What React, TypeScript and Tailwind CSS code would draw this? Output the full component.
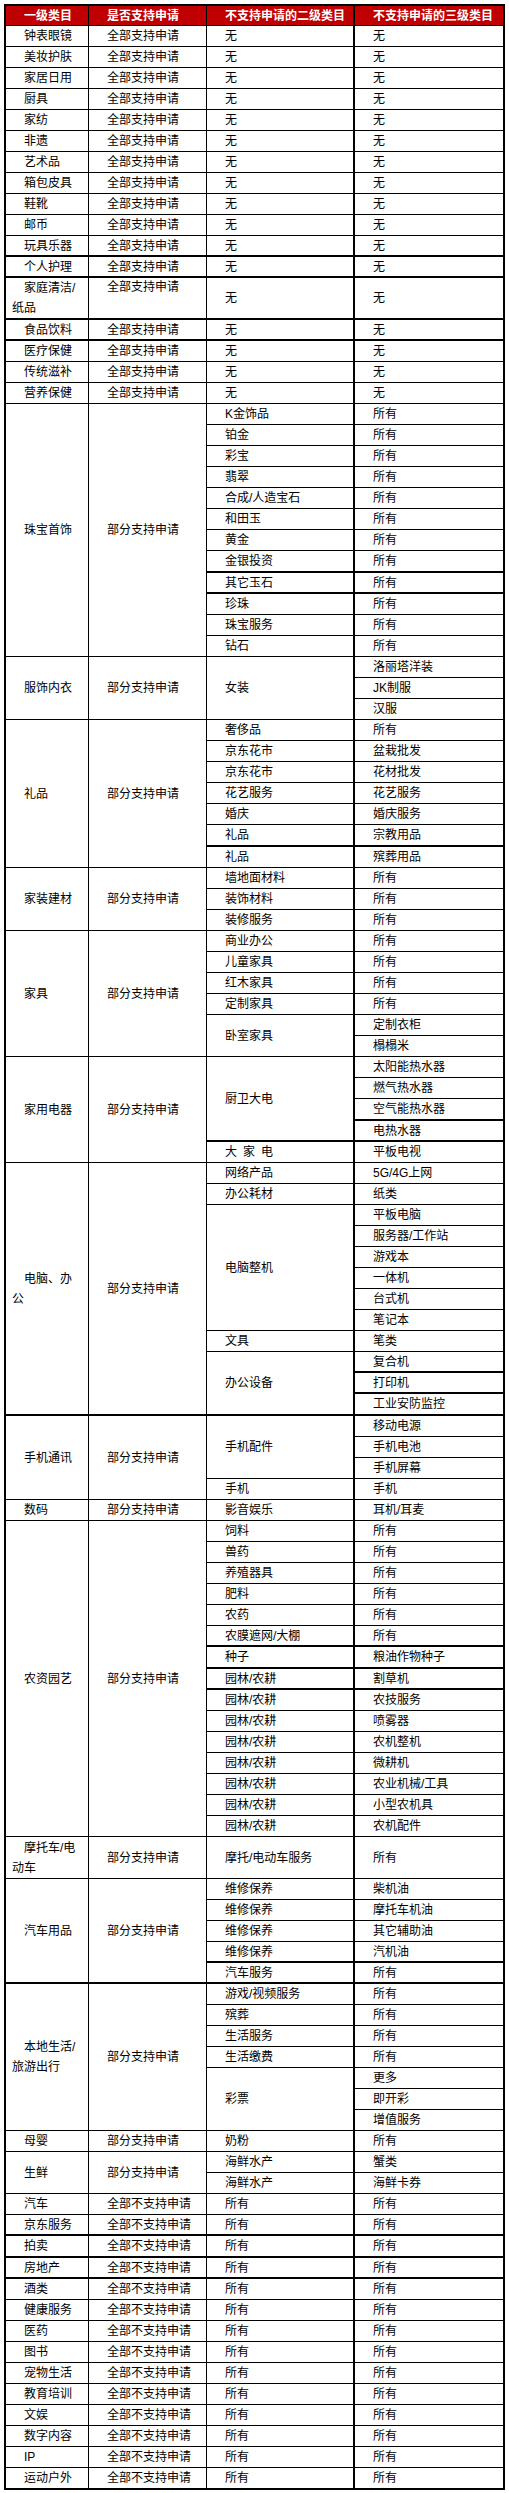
import React from "react";

type Leaf = { t: string; h?: 21 | 22 | 42; tb?: boolean };
type Sub = { t: string; leaves: Leaf[]; tb?: boolean };
type Group = { t: React.ReactNode; s: string; subs: Sub[]; tb?: boolean; top?: boolean; ml?: boolean };

const H: Record<number, string> = { 21: "h-[21px]", 22: "h-[22px]", 42: "h-[42px]" };

function L(t: string, h?: 21 | 22 | 42, tb?: boolean): Leaf {
  return { t, h, tb };
}
function S(t: string, leaves: Leaf[], tb?: boolean): Sub {
  return { t, leaves, tb };
}
function S1(t: string, c4: string, h?: 21 | 22 | 42, tb?: boolean): Sub {
  return { t, leaves: [{ t: c4, h, tb }], tb };
}
function A(t: string, h?: 21 | 22 | 42, tb?: boolean): Sub {
  return S1(t, "所有", h, tb);
}

const YES = "全部支持申请";
const PART = "部分支持申请";
const NO = "全部不支持申请";

function full(name: string, h?: 21 | 22, tb?: boolean): Group {
  return { t: name, s: YES, subs: [S1("无", "无", h, tb)], tb };
}
function none(name: string, h?: 21 | 22, tb?: boolean): Group {
  return { t: name, s: NO, subs: [S1("所有", "所有", h, tb)], tb };
}

const groups: Group[] = [
  full("钟表眼镜"),
  full("美妆护肤"),
  full("家居日用"),
  full("厨具"),
  full("家纺"),
  full("非遗"),
  full("艺术品"),
  full("箱包皮具"),
  full("鞋靴"),
  full("邮币"),
  full("玩具乐器", 21, true),
  full("个人护理", 21, true),
  {
    t: (
      <>
        家庭清洁/
        <br />
        纸品
      </>
    ),
    s: YES,
    subs: [S1("无", "无", 42, true)],
    tb: true,
    top: true,
    ml: true,
  },
  full("食品饮料", 21, true),
  full("医疗保健"),
  full("传统滋补"),
  full("营养保健"),
  {
    t: "珠宝首饰",
    s: PART,
    subs: [
      A("K金饰品"),
      A("铂金"),
      A("彩宝"),
      A("翡翠"),
      A("合成/人造宝石"),
      A("和田玉"),
      A("黄金"),
      A("金银投资", 22, true),
      A("其它玉石", 21, true),
      A("珍珠"),
      A("珠宝服务"),
      A("钻石"),
    ],
  },
  {
    t: "服饰内衣",
    s: PART,
    subs: [S("女装", [L("洛丽塔洋装"), L("JK制服"), L("汉服")])],
  },
  {
    t: "礼品",
    s: PART,
    subs: [
      A("奢侈品"),
      S1("京东花市", "盆栽批发"),
      S1("京东花市", "花材批发"),
      S1("花艺服务", "花艺服务"),
      S1("婚庆", "婚庆服务"),
      S1("礼品", "宗教用品", 22, true),
      S1("礼品", "殡葬用品"),
    ],
  },
  {
    t: "家装建材",
    s: PART,
    subs: [A("墙地面材料"), A("装饰材料"), A("装修服务")],
  },
  {
    t: "家具",
    s: PART,
    subs: [
      A("商业办公"),
      A("儿童家具"),
      A("红木家具"),
      A("定制家具"),
      S("卧室家具", [L("定制衣柜"), L("榻榻米")]),
    ],
  },
  {
    t: "家用电器",
    s: PART,
    subs: [
      S(
        "厨卫大电",
        [L("太阳能热水器"), L("燃气热水器"), L("空气能热水器", 22, true), L("电热水器", 21, true)],
        true
      ),
      S1("大\u2002家\u2002电", "平板电视"),
    ],
  },
  {
    t: (
      <>
        电脑、办
        <br />
        公
      </>
    ),
    ml: true,
    s: PART,
    tb: true,
    subs: [
      S1("网络产品", "5G/4G上网"),
      S1("办公耗材", "纸类"),
      S("电脑整机", [L("平板电脑"), L("服务器/工作站"), L("游戏本"), L("一体机"), L("台式机"), L("笔记本")]),
      S1("文具", "笔类"),
      S("办公设备", [L("复合机", 21, true), L("打印机", 21, true), L("工业安防监控", 22, true)], true),
    ],
  },
  {
    t: "手机通讯",
    s: PART,
    subs: [S("手机配件", [L("移动电源"), L("手机电池"), L("手机屏幕")]), S1("手机", "手机")],
  },
  {
    t: "数码",
    s: PART,
    subs: [S1("影音娱乐", "耳机/耳麦")],
  },
  {
    t: "农资园艺",
    s: PART,
    subs: [
      A("饲料"),
      A("兽药"),
      A("养殖器具"),
      A("肥料"),
      A("农药"),
      A("农膜遮网/大棚", 21, true),
      S1("种子", "粮油作物种子", 22, true),
      S1("园林/农耕", "割草机", 21, true),
      S1("园林/农耕", "农技服务"),
      S1("园林/农耕", "喷雾器"),
      S1("园林/农耕", "农机整机"),
      S1("园林/农耕", "微耕机"),
      S1("园林/农耕", "农业机械/工具"),
      S1("园林/农耕", "小型农机具"),
      S1("园林/农耕", "农机配件"),
    ],
  },
  {
    t: (
      <>
        摩托车/电
        <br />
        动车
      </>
    ),
    ml: true,
    s: PART,
    subs: [A("摩托/电动车服务", 42)],
  },
  {
    t: "汽车用品",
    s: PART,
    tb: true,
    subs: [
      S1("维修保养", "柴机油"),
      S1("维修保养", "摩托车机油"),
      S1("维修保养", "其它辅助油"),
      S1("维修保养", "汽机油", 21, true),
      A("汽车服务", 21, true),
    ],
  },
  {
    t: (
      <>
        本地生活/
        <br />
        旅游出行
      </>
    ),
    ml: true,
    s: PART,
    subs: [
      A("游戏/视频服务"),
      A("殡葬"),
      A("生活服务"),
      A("生活缴费"),
      S("彩票", [L("更多"), L("即开彩"), L("增值服务")]),
    ],
  },
  { t: "母婴", s: PART, subs: [A("奶粉")] },
  {
    t: "生鲜",
    s: PART,
    subs: [S1("海鲜水产", "蟹类"), S1("海鲜水产", "海鲜卡券")],
  },
  none("汽车"),
  none("京东服务", 21, true),
  none("拍卖", 22, true),
  none("房地产", 21, true),
  none("酒类"),
  none("健康服务"),
  none("医药"),
  none("图书"),
  none("宠物生活"),
  none("教育培训"),
  none("文娱"),
  none("数字内容"),
  none("IP"),
  none("运动户外", 22, true),
];

const base = "border-black p-0 pl-[6px] indent-[12px] text-[12px] text-black text-left whitespace-nowrap font-normal";

export default function App() {
  const rows: React.ReactNode[] = [];
  let key = 0;
  groups.forEach((g) => {
    const n = g.subs.reduce((a, s) => a + s.leaves.length, 0);
    let first = true;
    g.subs.forEach((s) => {
      s.leaves.forEach((l, li) => {
        rows.push(
          <tr key={key++}>
            {first && (
              <td
                rowSpan={n}
                className={`${base} border-r align-middle ${g.tb ? "border-b-2" : "border-b"} ${
                  g.ml ? "leading-[20px]" : "leading-[18px]"
                }`}
              >
                {g.t}
              </td>
            )}
            {first && (
              <td
                rowSpan={n}
                className={`${base} border-r leading-[18px] ${g.top ? "align-top" : "align-middle"} ${
                  g.tb ? "border-b-2" : "border-b"
                }`}
              >
                {g.s}
              </td>
            )}
            {li === 0 && (
              <td
                rowSpan={s.leaves.length}
                className={`${base} border-r-2 align-middle leading-[18px] ${s.tb ? "border-b-2" : "border-b"}`}
              >
                {s.t}
              </td>
            )}
            <td
              className={`${base} border-r-2 align-middle leading-[18px] ${l.tb ? "border-b-2" : "border-b"} ${
                H[l.h ?? 21]
              }`}
            >
              {l.t}
            </td>
          </tr>
        );
        first = false;
      });
    });
  });

  const th = "bg-[#c00000] border-black border-b p-0 pl-[6px] indent-[12px] text-[12px] text-white font-bold text-left leading-[18px] align-middle whitespace-nowrap h-[20px]";

  return (
    <div className="min-h-screen bg-white pt-[4px] pl-[4px] font-[family-name:'Liberation_Sans','Noto_Sans_CJK_SC',sans-serif]">
      <table className="border-separate border-spacing-0 table-fixed w-[501px] border-l-2 border-t-2 border-black">
        <colgroup>
          <col className="w-[83px]" />
          <col className="w-[118px]" />
          <col className="w-[148px]" />
          <col className="w-[150px]" />
        </colgroup>
        <thead>
          <tr>
            <th className={`${th} border-r`}>一级类目</th>
            <th className={`${th} border-r`}>是否支持申请</th>
            <th className={`${th} border-r-2`}>不支持申请的二级类目</th>
            <th className={`${th} border-r-2`}>不支持申请的三级类目</th>
          </tr>
        </thead>
        <tbody>{rows}</tbody>
      </table>
    </div>
  );
}
